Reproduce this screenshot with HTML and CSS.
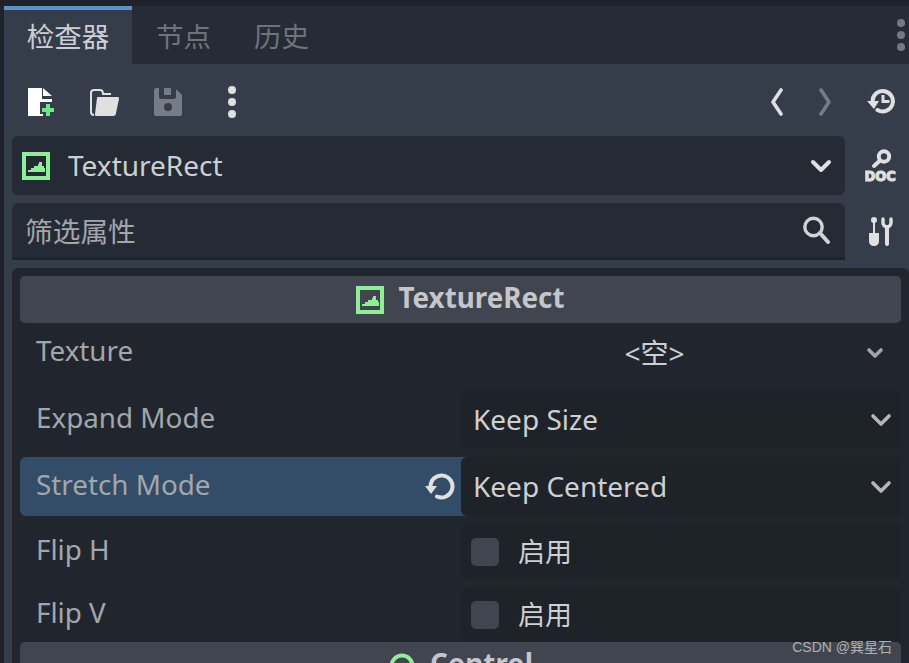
FILE: index.html
```html
<!DOCTYPE html>
<html lang="en">
<head>
  <meta charset="UTF-8" />
  <title>Inspector</title>
  <link rel="stylesheet" href="styles.css">
</head>
<body>
  <div class="dock">
    <!-- Tabs -->
    <div class="tabbar">
      <div class="tab active">检查器</div>
      <div class="tab">节点</div>
      <div class="tab">历史</div>
      <svg class="tab-more" width="10" height="32" viewBox="0 0 10 32"><circle cx="5" cy="4" r="4"/><circle cx="5" cy="16" r="4"/><circle cx="5" cy="28" r="4"/></svg>
    </div>

    <div class="main">
      <!-- Toolbar -->
      <div class="toolbar">
        <svg class="tool" width="28" height="28" viewBox="0 0 28 28">
          <path fill="#fff" d="M0 0h14v11h10v3H12v12h3v2H0z"/>
          <path fill="#fff" d="M15 0l9 8h-9z"/>
          <path fill="#6fe58d" d="M18 16h4v4h4v4h-4v4h-4v-4h-4v-4h4z"/>
        </svg>
        <svg class="tool" width="30" height="28" viewBox="0 0 30 28">
          <path fill="none" stroke="#e0e0e0" stroke-width="2" d="M4 27c-2 0-3-1-3-3V5c0-2 1-3 3-3h6c2 0 3 1 3 4h8"/>
          <path fill="#e0e0e0" d="M8 9h20c1 0 1 1 1 2l-3 14c0 2-1 3-3 3H6c-1 0-1-1-1-2l2-16c0-1 0-1 1-1z"/>
        </svg>
        <svg class="tool save" width="28" height="28" viewBox="0 0 28 28">
          <path fill="#767b85" fill-rule="evenodd" d="M2 0h3v9c0 1 1 2 2 2h13c1 0 2-1 2-2V1l6 6v19c0 1-1 2-2 2H2c-1 0-2-1-2-2V2C0 1 1 0 2 0zM10 0h7v7h-7zM14 15a4 4 0 1 0 0 8 4 4 0 0 0 0-8z"/>
        </svg>
        <svg class="tool dots" width="10" height="32" viewBox="0 0 10 32"><circle cx="5" cy="4" r="4"/><circle cx="5" cy="16" r="4"/><circle cx="5" cy="28" r="4"/></svg>
        <div class="spacer"></div>
        <svg class="nav" width="14" height="28" viewBox="0 0 14 28"><path fill="none" stroke="#e0e0e0" stroke-width="3.6" stroke-linecap="round" stroke-linejoin="round" d="M11 2L3 14l8 12"/></svg>
        <svg class="nav" width="14" height="28" viewBox="0 0 14 28"><path fill="none" stroke="#767b85" stroke-width="3.6" stroke-linecap="round" stroke-linejoin="round" d="M3 2l8 12-8 12"/></svg>
        <svg class="history" width="28" height="26" viewBox="0 0 28 26">
          <path fill="none" stroke="#e0e0e0" stroke-width="4" stroke-linecap="round" d="M5.5 12a10.2 10.2 0 1 1 5 9"/>
          <path fill="#e0e0e0" d="M0 12h12l-5 8z"/>
          <path fill="#e0e0e0" d="M14.5 6h3v5h5v3h-8z"/>
        </svg>
      </div>

      <!-- Node selector -->
      <div class="line">
        <div class="box selector">
          <svg width="28" height="28" viewBox="0 0 28 28"><rect x="2" y="2" width="24" height="24" fill="none" stroke="#8eef97" stroke-width="4"/><path fill="#8eef97" d="M6 20v-2h3v-2h3v-2h4v-2h1v-2h3v4h2v2h1v4z"/></svg>
          <span class="sel-name">TextureRect</span>
          <svg width="22" height="14" viewBox="0 0 22 14"><path fill="none" stroke="#e0e0e0" stroke-width="4" stroke-linecap="round" stroke-linejoin="round" d="M3 3l8 8 8-8"/></svg>
        </div>
        <svg class="doc-icon" width="32" height="36" viewBox="0 0 32 36">
          <circle cx="19" cy="8.5" r="5.2" fill="none" stroke="#e0e0e0" stroke-width="4"/>
          <path fill="none" stroke="#e0e0e0" stroke-width="4" stroke-linecap="round" d="M14.5 13l-5.5 5"/>
          <text class="doc-text" transform="translate(-0.5 33) scale(1 1.15)">DOC</text>
        </svg>
      </div>

      <!-- Filter -->
      <div class="line">
        <div class="box filter">
          <span>筛选属性</span>
          <svg width="28" height="28" viewBox="0 0 28 28"><circle cx="10.5" cy="11" r="8.7" fill="none" stroke="#d0d2d4" stroke-width="3.4"/><path stroke="#d0d2d4" stroke-width="4" stroke-linecap="round" d="M17 17l8 9"/></svg>
        </div>
        <svg class="tools-icon" width="26" height="30" viewBox="0 0 26 30" fill="#e0e0e0">
          <circle cx="6" cy="3" r="3"/>
          <path d="M5 3h2v13H5z"/>
          <path d="M1 16h10v8c0 3-2 5-5 5s-5-2-5-5z"/>
          <path fill="none" stroke="#e0e0e0" stroke-width="3.4" stroke-linecap="round" d="M15 2v4c0 2 2 4 4 4s4-2 4-4V2"/>
          <path stroke="#e0e0e0" stroke-width="4" stroke-linecap="round" d="M19 10v17"/>
        </svg>
      </div>

      <!-- Properties -->
      <div class="panel">
        <div class="section">
          <svg width="28" height="28" viewBox="0 0 28 28"><rect x="2" y="2" width="24" height="24" fill="none" stroke="#8eef97" stroke-width="4"/><path fill="#8eef97" d="M6 20v-2h3v-2h3v-2h4v-2h1v-2h3v4h2v2h1v4z"/></svg>
          <span>TextureRect</span>
        </div>

        <div class="prop">
          <div class="prop-label"><span>Texture</span></div>
          <div class="prop-value plain">
            <span class="empty">&lt;空&gt;</span>
            <svg width="18" height="12" viewBox="0 0 18 12"><path fill="none" stroke="#a2a4a8" stroke-width="3.6" stroke-linecap="round" stroke-linejoin="round" d="M3 3l6 6 6-6"/></svg>
          </div>
        </div>

        <div class="prop">
          <div class="prop-label"><span>Expand Mode</span></div>
          <div class="prop-value">
            <span>Keep Size</span>
            <svg width="22" height="14" viewBox="0 0 22 14"><path fill="none" stroke="#b4b6ba" stroke-width="3.6" stroke-linecap="round" stroke-linejoin="round" d="M3 3l8 8 8-8"/></svg>
          </div>
        </div>

        <div class="prop">
          <div class="prop-label changed">
            <span>Stretch Mode</span>
            <svg width="30" height="28" viewBox="0 0 30 28">
              <path fill="none" stroke="#e0e0e0" stroke-width="4" stroke-linecap="round" d="M5.5 13a11 11 0 1 1 6.5 10.5"/>
              <path fill="#e0e0e0" d="M0 13h12l-6 8z"/>
            </svg>
          </div>
          <div class="prop-value">
            <span>Keep Centered</span>
            <svg width="22" height="14" viewBox="0 0 22 14"><path fill="none" stroke="#b4b6ba" stroke-width="3.6" stroke-linecap="round" stroke-linejoin="round" d="M3 3l8 8 8-8"/></svg>
          </div>
        </div>

        <div class="prop short">
          <div class="prop-label"><span>Flip H</span></div>
          <div class="prop-value check">
            <div class="checkbox"></div>
            <span>启用</span>
          </div>
        </div>

        <div class="prop short flush">
          <div class="prop-label"><span>Flip V</span></div>
          <div class="prop-value check">
            <div class="checkbox"></div>
            <span>启用</span>
          </div>
        </div>

        <div class="section">
          <svg width="28" height="28" viewBox="0 0 28 28"><circle cx="14" cy="14" r="10.5" fill="none" stroke="#8eef97" stroke-width="4"/></svg>
          <span>Control</span>
        </div>
      </div>
    </div>
  </div>
  <div class="watermark">CSDN @巽星石</div>
</body>
</html>
```

FILE: styles.css
```css
html, body {
  margin: 0;
  height: 100%;
  overflow: hidden;
}
body {
  font-family: "Noto Sans", "Noto Sans CJK SC", sans-serif;
  background: #1e232b;
  color: #cdcfd2;
  font-size: 28px;
  position: relative;
}
svg { display: block; flex: none; }

.dock {
  padding: 6px 0 0 4px;
  height: 657px;
  display: flex;
  flex-direction: column;
}

/* tabs */
.tabbar {
  display: flex;
  height: 58px;
  background: #262c36;
  flex: none;
  align-items: center;
}
.tab {
  height: 58px;
  width: 98px;
  padding: 0 0 0 21px;
  display: flex;
  align-items: center;
  color: #6f747c;
  font-size: 27.5px;
  box-sizing: border-box;
}
.tab.active {
  width: 128px;
  margin-right: 3px;
  background: #363d4a;
  color: #cdcfd2;
  border-top: 4px solid #5a93cb;
  justify-content: center;
  padding: 0 0 4px;
}
.tab-more {
  fill: #74787f;
  margin-left: auto;
  margin-right: 3px;
}

.main {
  background: #363d4a;
  flex: 1;
  min-height: 0;
}

/* toolbar */
.toolbar {
  height: 72px;
  box-sizing: border-box;
  display: flex;
  align-items: center;
  padding: 4px 14px 0 24px;
}
.tool { margin-right: 34px; }
.tool.save { margin-right: 45px; }
.dots { fill: #e0e0e0; }
.spacer { flex: 1; }
.nav { margin-right: 34px; }
.history { margin-left: 1px; }

/* selector and filter */
.line {
  display: flex;
  align-items: center;
  padding-left: 8px;
  margin-bottom: 8px;
}
.box {
  width: 833px;
  height: 59px;
  background: #252b35;
  border-radius: 6px;
  box-sizing: border-box;
  display: flex;
  align-items: center;
  flex: none;
}
.doc-icon { margin-left: 20px; }
.tools-icon { margin-left: 23px; }
.selector { padding: 0 13px 0 10px; }
.sel-name { margin-left: 18px; flex: 1; padding-bottom: 2px; }
.filter {
  height: 57px;
  border-radius: 6px 6px 0 0;
  border-bottom: 3px solid #1e232b;
  padding: 0 14px 0 13px;
  justify-content: space-between;
  color: #a3a6ab;
  font-size: 27.7px;
}
.doc-text {
  font-family: "DejaVu Sans", sans-serif;
  font-weight: 700;
  font-size: 13px;
  fill: #e0e0e0;
  stroke: #e0e0e0;
  stroke-width: 1px;
}

/* property list */
.panel {
  margin-left: 8px;
  background: #21262e;
  border-radius: 6px 6px 0 0;
  padding: 8px 8px 0 8px;
  height: 395px;
  overflow: hidden;
  box-sizing: border-box;
}
.section {
  height: 47px;
  background: #41454f;
  border-radius: 5px;
  display: flex;
  align-items: center;
  justify-content: center;
  gap: 14px;
  font-weight: 700;
  font-size: 27.8px;
  color: #c4c6ca;
}
.section span { padding-bottom: 6px; }
.prop {
  display: flex;
  height: 59px;
  margin-bottom: 8px;
}
.prop.short { height: 55px; }
.prop.flush { margin-bottom: 0; }
.prop-label {
  width: 441px;
  padding: 0 16px;
  box-sizing: border-box;
  display: flex;
  align-items: center;
  justify-content: space-between;
  color: #a3a6ab;
  font-size: 27.8px;
  flex: none;
}
.prop-label span { padding-bottom: 6px; }
.prop-label.changed {
  width: 447px;
  margin-right: -6px;
  background: #334d68;
  border-radius: 6px 0 0 6px;
  padding: 0 12px 0 16px;
}
.prop-value {
  flex: 1;
  background: #1e2229;
  border-radius: 6px;
  display: flex;
  align-items: center;
  justify-content: space-between;
  padding: 0 9px 0 12px;
  position: relative;
}
.prop-value span { padding-bottom: 2px; }
.prop-value.plain {
  background: none;
  padding: 0 17px 0 0;
}
.empty {
  flex: 1;
  text-align: center;
  padding-right: 18px;
}
.prop-value.check {
  justify-content: flex-start;
  padding-left: 10px;
  gap: 19px;
  font-size: 27px;
}
.checkbox {
  width: 28px;
  height: 28px;
  background: #41454f;
  border-radius: 5px;
}

.watermark {
  position: absolute;
  right: 17px;
  top: 636px;
  font-family: "Liberation Sans", "Noto Sans CJK SC", sans-serif;
  font-size: 14px;
  color: #aeb0b4;
}
```
